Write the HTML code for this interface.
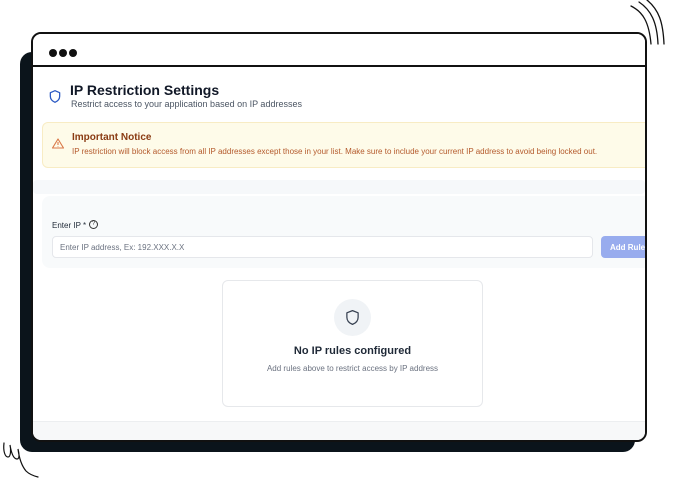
<!DOCTYPE html>
<html><head><meta charset="utf-8"><style>
*{margin:0;padding:0;box-sizing:border-box}
body{width:677px;height:489px;background:#fff;position:relative;overflow:hidden;font-family:"Liberation Sans",sans-serif}
.abs{position:absolute}
</style></head><body>
<div class="abs" style="left:20px;top:52px;width:615px;height:400px;background:#0b141b;border-radius:12px"></div>
<div class="abs" style="left:31px;top:32px;width:616px;height:410px;background:#fff;border:2px solid #111;border-radius:10px;overflow:hidden">
  <div class="abs" style="left:0;top:0;right:0;height:33px;border-bottom:2px solid #111;background:#fff"></div>
  <div class="abs" style="left:16px;top:15px;width:8px;height:8px;border-radius:50%;background:#111"></div>
  <div class="abs" style="left:26px;top:15px;width:8px;height:8px;border-radius:50%;background:#111"></div>
  <div class="abs" style="left:36px;top:15px;width:8px;height:8px;border-radius:50%;background:#111"></div>
  <svg class="abs" style="left:15px;top:55px" width="14" height="15" viewBox="0 0 24 24" fill="none" stroke="#2b59c3" stroke-width="2.2" stroke-linejoin="round"><path d="M12 2 4 5.5v6c0 5 3.5 8.5 8 10.5 4.5-2 8-5.5 8-10.5v-6z"/></svg>
  <div class="abs" style="left:37px;top:48px;font-size:14px;font-weight:bold;color:#111827">IP Restriction Settings</div>
  <div class="abs" style="left:38px;top:65px;font-size:9px;color:#4b5563">Restrict access to your application based on IP addresses</div>
  <div class="abs" style="left:9px;top:88px;width:620px;height:46px;background:#fefbe9;border:1px solid #f8ecc4;border-radius:6px"></div>
  <svg class="abs" style="left:19px;top:104px" width="12" height="11" viewBox="0 0 24 22" fill="none" stroke="#d97746" stroke-width="2.2" stroke-linejoin="round"><path d="M12 2 1 20h22z"/><path d="M12 8v6M12 16.5v1"/></svg>
  <div class="abs" style="left:39px;top:98px;font-size:10px;font-weight:bold;color:#8a3b12">Important Notice</div>
  <div class="abs" style="left:39px;top:113px;font-size:8px;color:#b45a2c;white-space:nowrap">IP restriction will block access from all IP addresses except those in your list. Make sure to include your current IP address to avoid being locked out.</div>
  <div class="abs" style="left:0;top:146px;right:0;height:14px;background:#f6f8fa;border-radius:4px"></div>
  <div class="abs" style="left:9px;top:162px;width:620px;height:72px;background:#f8fafb;border-radius:8px"></div>
  <div class="abs" style="left:19px;top:187px;font-size:8px;color:#1f2937">Enter IP *</div>
  <div class="abs" style="left:56px;top:186px;width:9px;height:9px;border:1px solid #333;border-radius:50%;font-size:6px;text-align:center;line-height:7px;color:#333">?</div>
  <div class="abs" style="left:19px;top:202px;width:541px;height:22px;background:#fff;border:1px solid #e5e7eb;border-radius:4px;font-size:8px;color:#6b7280;padding:6px 7px">Enter IP address, Ex: 192.XXX.X.X</div>
  <div class="abs" style="left:568px;top:202px;width:60px;height:22px;background:#98acee;border-radius:4px;font-size:8px;font-weight:bold;color:#fff;padding:7px 9px">Add Rule</div>
  <div class="abs" style="left:189px;top:246px;width:261px;height:127px;border:1px solid #e6e8eb;border-radius:6px;background:#fff"></div>
  <div class="abs" style="left:301px;top:265px;width:37px;height:37px;border-radius:50%;background:#f0f3f6"></div>
  <svg class="abs" style="left:312px;top:275px" width="15" height="17" viewBox="0 0 24 26" fill="none" stroke="#374151" stroke-width="2" stroke-linejoin="round"><path d="M12 2 3 5.5v7c0 5.5 4 9.5 9 11.5 5-2 9-6 9-11.5v-7z"/></svg>
  <div class="abs" style="left:189px;top:311px;width:261px;text-align:center;font-size:11px;font-weight:bold;color:#1f2937">No IP rules configured</div>
  <div class="abs" style="left:189px;top:330px;width:261px;text-align:center;font-size:8px;color:#6b7280">Add rules above to restrict access by IP address</div>
  <div class="abs" style="left:0;top:387px;right:0;height:22px;background:#f7f8f9;border-top:1px solid #eceef0"></div>
</div>
<svg class="abs" style="left:625px;top:0" width="52" height="48" fill="none" stroke="#111" stroke-width="1.3" stroke-linecap="round"><path d="M6 6c12 6 18 16 20 38"/><path d="M14 2c12 8 18 20 19 42"/><path d="M22 0c12 10 16 22 17 44"/></svg>
<svg class="abs" style="left:0;top:440px" width="45" height="49" fill="none" stroke="#111" stroke-width="1.2" stroke-linecap="round"><path d="M4 3c-1 8 1 14 4 14 3 0 3-8 2-12 1 6 3 14 7 14 3 0 2-6 1-10 1 8 3 16 8 22 3 3 8 5 12 6"/></svg>
</body></html>
